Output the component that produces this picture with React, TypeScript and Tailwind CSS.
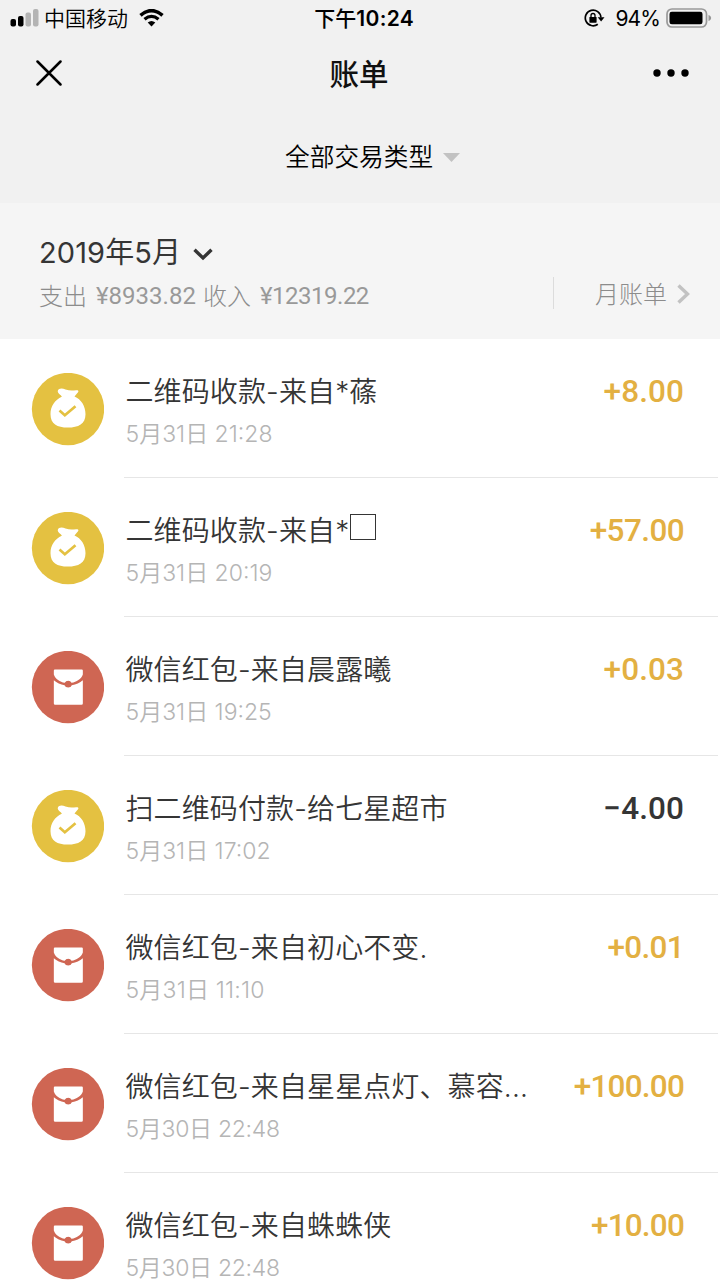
import React from "react";

type Kind = "bag" | "packet";

interface Entry {
  kind: Kind;
  title: string;
  missingGlyph?: boolean;
  time: string;
  timeTracking?: string;
  amount: string;
  tracking: string;
}

const entries: Entry[] = [
  { kind: "bag", title: "二维码收款-来自*蓧", time: "5月31日 21:28", amount: "+8.00", tracking: "tracking-[0.1px]" },
  { kind: "bag", title: "二维码收款-来自*", missingGlyph: true, time: "5月31日 20:19", amount: "+57.00", tracking: "tracking-[-0.6px]" },
  { kind: "packet", title: "微信红包-来自晨露曦", time: "5月31日 19:25", amount: "+0.03", tracking: "tracking-[0.1px]" },
  { kind: "bag", title: "扫二维码付款-给七星超市", time: "5月31日 17:02", amount: "−4.00", tracking: "tracking-[0.1px]" },
  { kind: "packet", title: "微信红包-来自初心不变.", time: "5月31日 11:10", timeTracking: "tracking-[0.2px]", amount: "+0.01", tracking: "tracking-[-0.7px]" },
  { kind: "packet", title: "微信红包-来自星星点灯、慕容...", time: "5月30日 22:48", timeTracking: "tracking-[-0.3px]", amount: "+100.00", tracking: "tracking-[-0.8px]" },
  { kind: "packet", title: "微信红包-来自蛛蛛侠", time: "5月30日 22:48", timeTracking: "tracking-[-0.3px]", amount: "+10.00", tracking: "tracking-[-0.8px]" },
];

function BagIcon() {
  return (
    <svg viewBox="33.500 37.500 219 219" className="size-[73px] shrink-0">
      <circle cx="144.500" cy="145.500" r="108.500" fill="#e4c141" />
      <path
        d="M114 91C116 83 127 83 137 87C148 91 158 91 169 89C178 88 177 94 172 98L164 108C184 116 197 137 197 161C197 190 176 201 144 201C112 201 92 190 92 161C92 138 105 118 126 109C124 103 112 99 114 91Z"
        fill="#fff"
      />
      <path d="M119 150L135 164L167 137" fill="none" stroke="#e4c141" strokeWidth="8" />
    </svg>
  );
}

function PacketIcon() {
  return (
    <svg viewBox="33.500 31.500 219 219" className="size-[73px] shrink-0">
      <circle cx="144.500" cy="139.500" r="108.500" fill="#cf6653" />
      <path d="M105 87H186Q189 87 189 90V102C184 116 170 124 155 127A11 11 0 0 0 135 127C120 124 107 116 102 102V90Q102 87 105 87Z" fill="#fff" />
      <path d="M102 119C111 127 122 132 134 134A12 12 0 0 0 156 134C169 132 180 127 189 119V189Q189 193 185 193H106Q102 193 102 189Z" fill="#fff" />
      <circle cx="145" cy="131" r="8.500" fill="#cf6653" />
    </svg>
  );
}

function StatusBar() {
  return (
    <div className="flex h-9 items-center pl-2.5 pr-2 text-black">
      <div className="flex w-[380px] flex-none items-center">
        <svg viewBox="0 0 29 18" className="h-[18px] w-[29px]">
          <rect x="0.500" y="10" width="5.500" height="7.500" rx="2" fill="#000" />
          <rect x="8" y="7" width="5.500" height="10.500" rx="2" fill="#000" />
          <rect x="15.500" y="3.500" width="5.500" height="14" rx="2" fill="#b4b4b4" />
          <rect x="23" y="0" width="5.500" height="17.500" rx="2" fill="#b4b4b4" />
        </svg>
        <span className="ml-[5px] pt-0.5 text-[21px] font-[350] leading-9">中国移动</span>
        <svg viewBox="0 0 25 18" className="ml-[11px] h-[18px] w-[25px]">
          <path d="M1.500 6.300Q12.500 -3 23.500 6.300" fill="none" stroke="#000" strokeWidth="3.600" />
          <path d="M5.500 10.300Q12.500 4.500 19.500 10.300" fill="none" stroke="#000" strokeWidth="3.300" />
          <path d="M8.700 13.600Q12.500 10.300 16.300 13.600L12.500 17.500Z" fill="#000" />
        </svg>
        <span className="ml-auto mr-[-24px] whitespace-nowrap pt-0.5 text-[21px] font-medium leading-9">
          下午<span className="font-semibold tracking-[0.3px]">10:24</span>
        </span>
      </div>
      <div className="ml-auto flex items-center">
        <svg viewBox="0 0 21 18" className="h-[18px] w-[21px]">
          <path d="M13.800 15.200A7.800 7.800 0 1 1 16.900 8.500" fill="none" stroke="#000" strokeWidth="1.700" />
          <path d="M13.700 8.300H20.500L17.100 12.500Z" fill="#000" />
          <rect x="5.400" y="8" width="7.200" height="5.700" rx="0.600" fill="#000" />
          <path d="M7 8V6.500a2 2 0 0 1 4 0V8" fill="none" stroke="#000" strokeWidth="1.300" />
        </svg>
        <span className="ml-[10px] pt-0.5 text-[21px] leading-9 tracking-[-0.9px]">94%</span>
        <svg viewBox="0 0 46 20" className="ml-[6px] h-5 w-[46px]">
          <rect x="1" y="1" width="39.500" height="18" rx="5" fill="none" stroke="#999" strokeWidth="1.700" />
          <rect x="3.500" y="3.700" width="33" height="12.600" rx="2.300" fill="#000" />
          <path d="M42.500 7C46 8 46 12 42.500 13Z" fill="#999" />
        </svg>
      </div>
    </div>
  );
}

function Row({ entry }: { entry: Entry }) {
  const income = entry.amount.startsWith("+");
  return (
    <li className="flex h-[139px] pl-[31px]">
      <div className="pt-[34px]">{entry.kind === "bag" ? <BagIcon /> : <PacketIcon />}</div>
      <div className="ml-5 mr-0.5 flex flex-1 justify-between border-b border-[#e6e6e6] pr-[34px] pt-[33px]">
        <div className="pl-[1.500px]">
          <div className="flex h-10 items-center whitespace-nowrap text-[28px] font-[350] leading-10 tracking-[0.12px] text-[#353535]">
            {entry.title}
            {entry.missingGlyph && <span className="mb-2 ml-px size-[26px] border border-[#353535]" />}
          </div>
          <div className={`mt-[3px] text-[23px] font-[350] leading-[38px] text-[#b5b5b5] ${entry.timeTracking ?? ""}`}>
            {entry.time}
          </div>
        </div>
        <div
          className={`font-['Roboto'] text-[31.500px] font-medium leading-[39px] ${entry.tracking} ${
            income ? "text-[#e3b042]" : "text-[#353535]"
          }`}
        >
          {entry.amount}
        </div>
      </div>
    </li>
  );
}

export default function App() {
  return (
    <div className="h-[1280px] w-[720px] overflow-hidden bg-white font-['Inter','Noto_Sans_CJK_SC',sans-serif]">
      <header className="h-[203px] bg-[#f1f1f1]">
        <StatusBar />
        <div className="grid h-[74px] grid-cols-3 items-center pl-9 pr-[31px]">
          <svg viewBox="0 0 26 26" className="size-[26px]">
            <path d="M1.500 1.500L24.500 24.500M24.500 1.500L1.500 24.500" stroke="#000" strokeWidth="2.500" strokeLinecap="round" />
          </svg>
          <h1 className="pr-[7px] pt-0.5 text-center text-[29.500px] font-medium leading-10 text-[#111]">账单</h1>
          <svg viewBox="0 0 36 8" className="h-2 w-9 justify-self-end">
            <circle cx="4" cy="4" r="3.700" />
            <circle cx="18" cy="4" r="3.700" />
            <circle cx="32" cy="4" r="3.700" />
          </svg>
        </div>
        <div className="flex h-[94px] items-center pl-[285px] text-[24.700px] font-[350] text-black">
          <span className="pt-0.5">全部交易类型</span>
          <svg viewBox="0 0 17 9" className="ml-[10px] h-[9px] w-[17px]">
            <path d="M0 0H17L8.500 9Z" fill="#c2c2c2" />
          </svg>
        </div>
      </header>
      <section className="flex h-[136px] justify-between bg-[#f5f5f5] pl-[39px] pr-[30px]">
        <div className="pt-[30px]">
          <div className="flex h-10 items-center text-[29px] leading-10 tracking-[0.1px] text-[#353535]">
            <span>2019年5月</span>
            <svg viewBox="0 0 20 13" className="ml-3 mt-0.5 h-[13px] w-5">
              <path d="M1.500 1.800L10 10L18.500 1.800" fill="none" stroke="#353535" strokeWidth="3.400" />
            </svg>
          </div>
          <div className="mt-[3px] flex h-10 items-center whitespace-nowrap text-[24px] font-light text-[#8c8c8c]">
            <span className="pt-px">支出</span>
            <span className="ml-[9px] w-[99px] font-['Roboto'] font-normal text-[#999]">¥8933.82</span>
            <span className="ml-2 pt-px">收入</span>
            <span className="ml-[9px] font-['Roboto'] font-normal tracking-[-0.5px] text-[#999]">¥12319.22</span>
          </div>
        </div>
        <div className="mt-[74px] flex h-8 items-center border-l border-[#dcdcdc] pl-[41px] text-[24px] font-light text-[#8c8c8c]">
          <span className="pt-[3px]">月账单</span>
          <svg viewBox="0 0 13 20" className="ml-2.5 mt-0.5 h-5 w-[13px]">
            <path d="M1.500 1.500L10.500 10L1.500 18.500" fill="none" stroke="#c2c2c2" strokeWidth="3.400" />
          </svg>
        </div>
      </section>
      <ul>
        {entries.map((entry) => (
          <Row key={entry.title} entry={entry} />
        ))}
      </ul>
    </div>
  );
}
